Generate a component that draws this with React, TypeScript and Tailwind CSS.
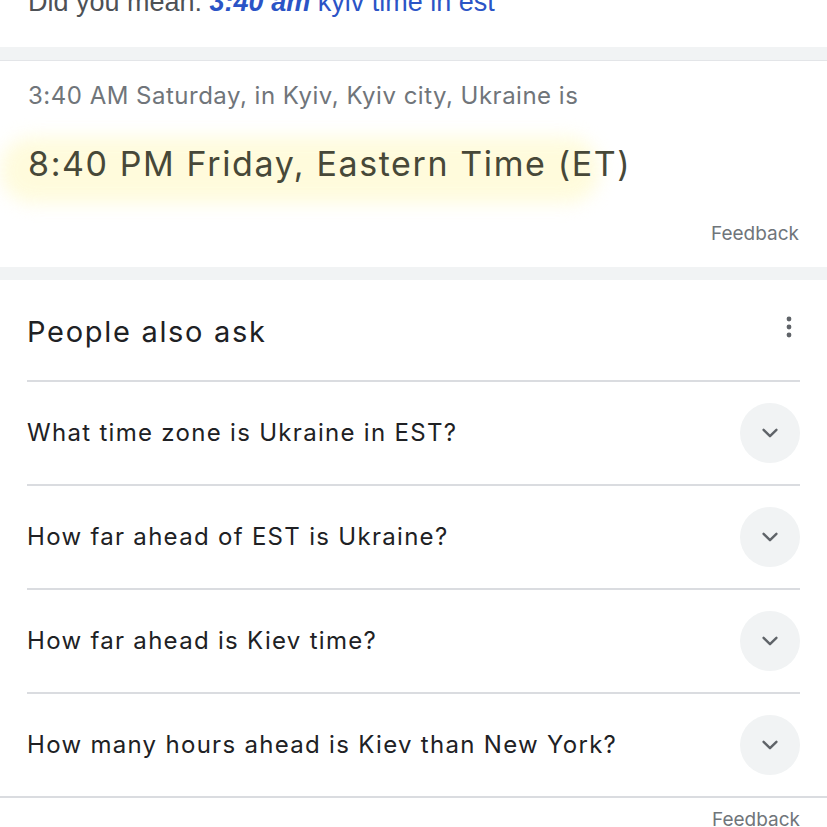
import React from "react";

const questions = [
  "What time zone is Ukraine in EST?",
  "How far ahead of EST is Ukraine?",
  "How far ahead is Kiev time?",
  "How many hours ahead is Kiev than New York?",
];

function Chevron() {
  return (
    <div className="flex h-[60px] w-[60px] shrink-0 items-center justify-center rounded-full bg-[#f1f3f4]">
      <svg width="22" height="22" viewBox="0 0 24 24" fill="none">
        <path d="M5 8.5l7 7 7-7" stroke="#5f6368" strokeWidth="2.6" strokeLinecap="round" strokeLinejoin="round" />
      </svg>
    </div>
  );
}

const inter = { fontFamily: "Inter, Roboto, 'Liberation Sans', sans-serif" };

export default function App() {
  return (
    <div className="relative h-[827px] w-[827px] overflow-hidden bg-white" style={inter}>
      <div className="flex h-[47px] items-start overflow-hidden px-[28px]">
        <div className="-mt-[15px] whitespace-nowrap text-[27px] leading-[34px] text-[#4d5156]" style={{ fontFamily: "'Liberation Sans', Arial, sans-serif" }}>
          Did you mean: <span className="font-bold italic text-[#2b54c6]">3:40 am</span>{" "}
          <span className="text-[#2b54c6]">kyiv time in est</span>
        </div>
      </div>
      <div className="h-[14px] border-b border-[#e3e5e8] bg-[#f1f3f4]" />
      <div className="relative h-[206px] px-[28px] pt-[19px]">
        <div className="pointer-events-none absolute left-0 top-[76px] h-[66px] w-[600px] rounded-full bg-[#fffbd9] opacity-90 blur-[9px]" />
        <div className="relative whitespace-nowrap text-[24px] leading-[32px] text-[#70757a]" style={{ letterSpacing: "0.5px" }}>
          3:40 AM Saturday, in Kyiv, Kyiv city, Ukraine is
        </div>
        <div className="relative mt-[30px] whitespace-nowrap text-[34px] leading-[44px] text-[#474838]" style={{ letterSpacing: "1.6px" }}>
          8:40 PM Friday, Eastern Time (ET)
        </div>
        <div className="flex justify-end pt-[36px] text-[19px] leading-[24px] text-[#70757a]">Feedback</div>
      </div>
      <div className="h-[13px] bg-[#f1f3f4]" />
      <div className="px-[27px]">
        <div className="flex h-[100px] items-center justify-between">
          <div className="pt-[4px] text-[29px] leading-[36px] text-[#202124]" style={{ letterSpacing: "1.7px" }}>People also ask</div>
          <svg width="6" height="22" viewBox="0 0 6 22" className="mr-[8px] -mt-[6px]">
            <circle cx="3" cy="3" r="2.4" fill="#5f6368" />
            <circle cx="3" cy="11" r="2.4" fill="#5f6368" />
            <circle cx="3" cy="19" r="2.4" fill="#5f6368" />
          </svg>
        </div>
        {questions.map((q) => (
          <div key={q} className="flex h-[104px] items-center justify-between border-t-2 border-[#dadce0]">
            <div className="whitespace-nowrap text-[24px] leading-[32px] text-[#202124]" style={{ letterSpacing: "1.3px" }}>{q}</div>
            <Chevron />
          </div>
        ))}
      </div>
      <div className="border-t-2 border-[#dadce0] px-[27px]">
        <div className="flex justify-end pt-[10px] text-[19px] leading-[24px] text-[#70757a]">Feedback</div>
      </div>
    </div>
  );
}
